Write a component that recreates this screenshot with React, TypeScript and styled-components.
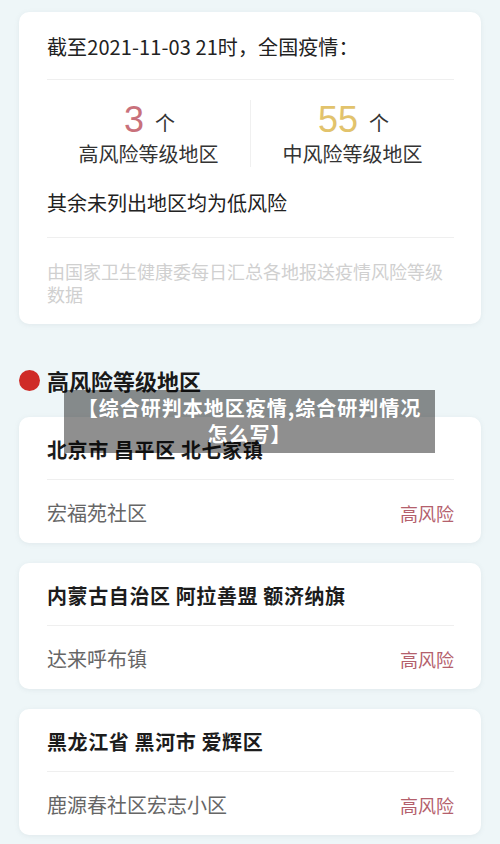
import React from "react";
import styled, { createGlobalStyle } from "styled-components";

const Global = createGlobalStyle`
  html, body { margin: 0; padding: 0; background: #eef6f8; }
  body { font-family: "Noto Sans CJK SC", "Noto Sans", "Liberation Sans", sans-serif; }
  * { box-sizing: border-box; }
`;

const Page = styled.div`
  position: relative;
  width: 500px;
  min-height: 844px;
  padding: 12px 19px 12px 19px;
  background: #eef6f8;
`;

const Card = styled.div`
  background: #ffffff;
  border-radius: 10px;
  box-shadow: 0 1px 5px rgba(120, 140, 150, 0.12);
  padding: 0 27px 0 28px;
`;

const SummaryHeader = styled.div`
  height: 67px;
  display: flex;
  align-items: center;
  font-size: 20px;
  color: #222;
  padding-top: 1px;
  letter-spacing: 0.1px;
`;

const Divider = styled.div`
  height: 1px;
  background: #efefef;
`;

const Stats = styled.div`
  display: grid;
  grid-template-columns: 1fr 1px 1fr;
  padding-top: 20px;
`;

const Stat = styled.div`
  display: flex;
  flex-direction: column;
  align-items: center;
`;

const StatLine = styled.div`
  height: 40px;
  display: flex;
  align-items: center;
  gap: 11px;
  padding-left: 2px;
`;

const Num = styled.span<{ $color: string }>`
  font-family: "Liberation Sans", Arial, sans-serif;
  font-size: 36px;
  color: ${(p) => p.$color};
`;

const Unit = styled.span`
  font-size: 20px;
  color: #333;
  margin-top: 4px;
`;

const StatLabel = styled.div`
  font-size: 20px;
  line-height: 27px;
  color: #333;
`;

const VLine = styled.div`
  background: #f0f0f0;
`;

const Note = styled.div`
  font-size: 20px;
  line-height: 26px;
  color: #222;
  padding: 23px 0 21px;
`;

const Source = styled.div`
  font-size: 18px;
  line-height: 23px;
  color: #d0d0d0;
  padding: 22px 10px 18px 0;
`;

const SectionTitle = styled.div`
  display: flex;
  align-items: center;
  gap: 7px;
  margin: 41px 0 22px;
  height: 30px;
  font-size: 22px;
  font-weight: 700;
  color: #1a1a1a;
`;

const Dot = styled.span`
  width: 21px;
  height: 21px;
  border-radius: 50%;
  background: #cf2b27;
  flex: none;
`;

const List = styled.div`
  display: flex;
  flex-direction: column;
  gap: 20px;
`;

const AreaTitle = styled.div`
  font-size: 20px;
  font-weight: 700;
  line-height: 26px;
  letter-spacing: 0.6px;
  color: #1c1c1c;
  padding: 20px 0 16px;
`;

const AreaRow = styled.div`
  display: flex;
  justify-content: space-between;
  align-items: center;
  line-height: 26px;
  padding: 20px 0 17px;
`;

const Place = styled.span`
  font-size: 20px;
  color: #666;
`;

const Risk = styled.span`
  font-size: 18px;
  color: #b4606c;
`;

const Overlay = styled.div`
  position: absolute;
  left: 64px;
  top: 390px;
  width: 371px;
  height: 63px;
  background: rgba(0, 0, 0, 0.44);
  color: #fff;
  font-size: 20px;
  font-weight: 700;
  line-height: 26px;
  letter-spacing: 1px;
  text-align: center;
  padding: 5px 12px 0;
`;

const areas = [
  { title: "北京市 昌平区 北七家镇", place: "宏福苑社区" },
  { title: "内蒙古自治区 阿拉善盟 额济纳旗", place: "达来呼布镇" },
  { title: "黑龙江省 黑河市 爱辉区", place: "鹿源春社区宏志小区" },
];

export default function App() {
  return (
    <Page>
      <Global />
      <Card>
        <SummaryHeader>截至2021-11-03 21时，全国疫情：</SummaryHeader>
        <Divider />
        <Stats>
          <Stat>
            <StatLine>
              <Num $color="#c9717b">3</Num>
              <Unit>个</Unit>
            </StatLine>
            <StatLabel>高风险等级地区</StatLabel>
          </Stat>
          <VLine />
          <Stat>
            <StatLine>
              <Num $color="#e2c36c">55</Num>
              <Unit>个</Unit>
            </StatLine>
            <StatLabel>中风险等级地区</StatLabel>
          </Stat>
        </Stats>
        <Note>其余未列出地区均为低风险</Note>
        <Divider />
        <Source>由国家卫生健康委每日汇总各地报送疫情风险等级数据</Source>
      </Card>

      <SectionTitle>
        <Dot />
        高风险等级地区
      </SectionTitle>

      <List>
        {areas.map((a) => (
          <Card key={a.title}>
            <AreaTitle>{a.title}</AreaTitle>
            <Divider />
            <AreaRow>
              <Place>{a.place}</Place>
              <Risk>高风险</Risk>
            </AreaRow>
          </Card>
        ))}
      </List>

      <Overlay>【综合研判本地区疫情,综合研判情况怎么写】</Overlay>
    </Page>
  );
}
